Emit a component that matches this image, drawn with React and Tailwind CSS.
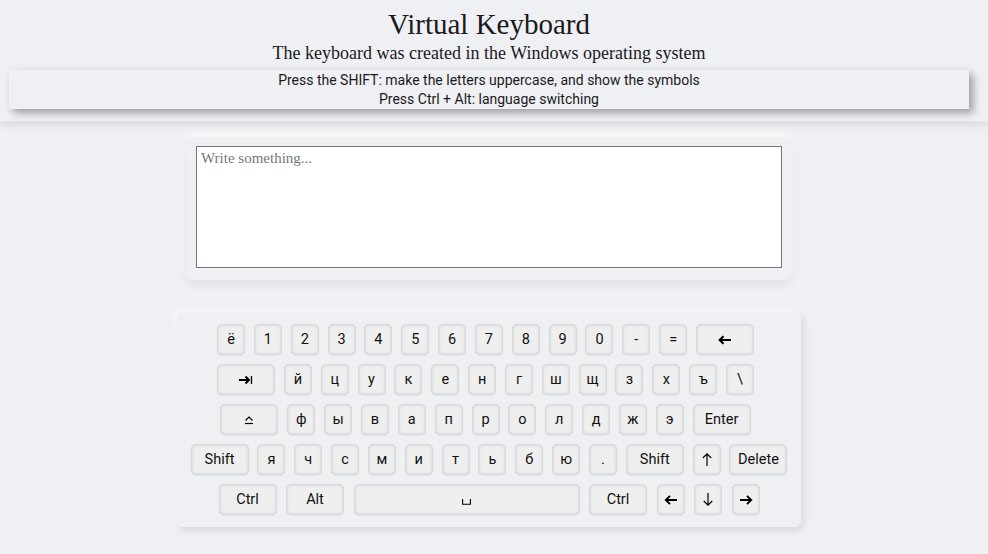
import React from "react";

const serif = { fontFamily: '"Liberation Serif", "Times New Roman", serif' };

function Key({ children, wide, space, className = "" }) {
  const w = space ? "w-[226px]" : wide ? "w-[58px]" : "w-[28px]";
  return (
    <div
      className={`${w} h-[31px] shrink-0 rounded-[5px] bg-[#efefef] flex items-center justify-center text-[14.5px] text-[#111] shadow-[inset_0_0_3px_1px_rgba(0,0,0,0.14),0_1px_1px_rgba(0,0,0,0.06)] ${className}`}
    >
      {children}
    </div>
  );
}

const Backspace = () => (
  <svg width="14" height="10" viewBox="0 0 14 10">
    <path d="M13 5H2M5.5 1.2L1.6 5l3.9 3.8" fill="none" stroke="#000" strokeWidth="2" />
  </svg>
);
const Tab = () => (
  <svg width="14" height="10" viewBox="0 0 14 10">
    <path d="M0 5h10M6.5 1.5L10 5l-3.5 3.5" fill="none" stroke="#000" strokeWidth="2" />
    <path d="M12.5 1v8" stroke="#000" strokeWidth="1.3" />
  </svg>
);
const Caps = () => (
  <svg width="10" height="10" viewBox="0 0 10 10">
    <path d="M1.5 5.5L5 2l3.5 3.5" fill="none" stroke="#000" strokeWidth="1.2" />
    <path d="M1 8.5h8" stroke="#000" strokeWidth="1.2" />
  </svg>
);
const Space = () => (
  <svg width="9" height="6" viewBox="0 0 9 6" className="mt-[4px]">
    <path d="M0.6 0v5.3h7.8V0" fill="none" stroke="#000" strokeWidth="1.1" />
  </svg>
);
const Arrow = ({ dir, bold }) => {
  const d = {
    left: "M13 6H2M6 1.8L1.8 6 6 10.2",
    right: "M1 6h11M8 1.8L12.2 6 8 10.2",
    up: "M6 14V2M1.8 6L6 1.8 10.2 6",
    down: "M6 1v12M1.8 9L6 13.2 10.2 9",
  }[dir];
  const v = dir === "up" || dir === "down";
  return (
    <svg width={v ? 12 : 14} height={v ? 15 : 12} viewBox={v ? "0 0 12 15" : "0 0 14 12"}>
      <path d={d} fill="none" stroke="#000" strokeWidth={bold ? 1.9 : 1.2} />
    </svg>
  );
};

export default function App() {
  const row1 = ["ё", "1", "2", "3", "4", "5", "6", "7", "8", "9", "0", "-", "="];
  const row2 = ["й", "ц", "у", "к", "е", "н", "г", "ш", "щ", "з", "х", "ъ", "\\"];
  const row3 = ["ф", "ы", "в", "а", "п", "р", "о", "л", "д", "ж", "э"];
  const row4 = ["я", "ч", "с", "м", "и", "т", "ь", "б", "ю", "."];
  return (
    <div
      className="min-h-[554px] bg-[#eef0f3] text-[#111]"
      style={{ fontFamily: 'Roboto, "Liberation Sans", Arial, sans-serif' }}
    >
      <header className="w-full h-[122px] bg-[#eff0f4] shadow-[0_3px_8px_rgba(0,0,0,0.09)] border-b border-[#e2e3e6]">
        <div className="w-[978px] flex flex-col items-center">
          <h1 className="text-[29px] leading-[34px] mt-[7px] text-[#1a1a1a]" style={serif}>
            Virtual Keyboard
          </h1>
          <p className="text-[18px] leading-[22px] mt-[1px] text-[#1a1a1a]" style={serif}>
            The keyboard was created in the Windows operating system
          </p>
          <div className="mt-[6px] self-start ml-[9px] w-[960px] h-[39px] bg-[#eff0f4] shadow-[4px_4px_8px_rgba(0,0,0,0.35)] flex flex-col items-center justify-center text-[14px] leading-[19px] text-[#1a1a1a]">
            <div className="mt-[1px]">Press the SHIFT: make the letters uppercase, and show the symbols</div>
            <div>Press Ctrl + Alt: language switching</div>
          </div>
        </div>
      </header>

      <main className="w-[978px] flex flex-col items-center">
        <div className="mt-[15px] w-[604px] pt-[9px] px-[9px] pb-[12px] rounded-[6px] bg-[#eff0f4] shadow-[0_4px_10px_rgba(0,0,0,0.08),0_-2px_8px_rgba(255,255,255,0.9)]">
          <textarea
            placeholder="Write something..."
            className="block w-[586px] h-[122px] bg-white border border-[#767676] px-[4px] py-[1px] text-[15px] leading-[20px] resize-none outline-none placeholder:text-[#777]"
            style={serif}
          />
        </div>

        <div className="mt-[32px] w-[624px] py-[12px] rounded-[6px] bg-[#eff0f4] shadow-[2px_3px_8px_rgba(0,0,0,0.12),-2px_-2px_6px_rgba(255,255,255,0.9)] flex flex-col gap-[9px]">
          <div className="flex justify-center gap-[8.85px] pr-[7px]">
            {row1.map((k) => (
              <Key key={k}>{k}</Key>
            ))}
            <Key wide>
              <Backspace />
            </Key>
          </div>
          <div className="flex justify-center gap-[8.85px] pr-[7px]">
            <Key wide>
              <Tab />
            </Key>
            {row2.map((k) => (
              <Key key={k}>{k}</Key>
            ))}
          </div>
          <div className="flex justify-center gap-[8.85px] pr-[7px]">
            <Key wide>
              <Caps />
            </Key>
            {row3.map((k) => (
              <Key key={k}>{k}</Key>
            ))}
            <Key wide>Enter</Key>
          </div>
          <div className="flex justify-center gap-[8.85px]">
            <Key wide>Shift</Key>
            {row4.map((k) => (
              <Key key={k}>{k}</Key>
            ))}
            <Key wide>Shift</Key>
            <Key>
              <Arrow dir="up" />
            </Key>
            <Key wide>Delete</Key>
          </div>
          <div className="flex justify-center gap-[9.5px]">
            <Key wide>Ctrl</Key>
            <Key wide>Alt</Key>
            <Key space>
              <Space />
            </Key>
            <Key wide>Ctrl</Key>
            <Key>
              <Arrow dir="left" bold />
            </Key>
            <Key>
              <Arrow dir="down" />
            </Key>
            <Key>
              <Arrow dir="right" bold />
            </Key>
          </div>
        </div>
      </main>
    </div>
  );
}
